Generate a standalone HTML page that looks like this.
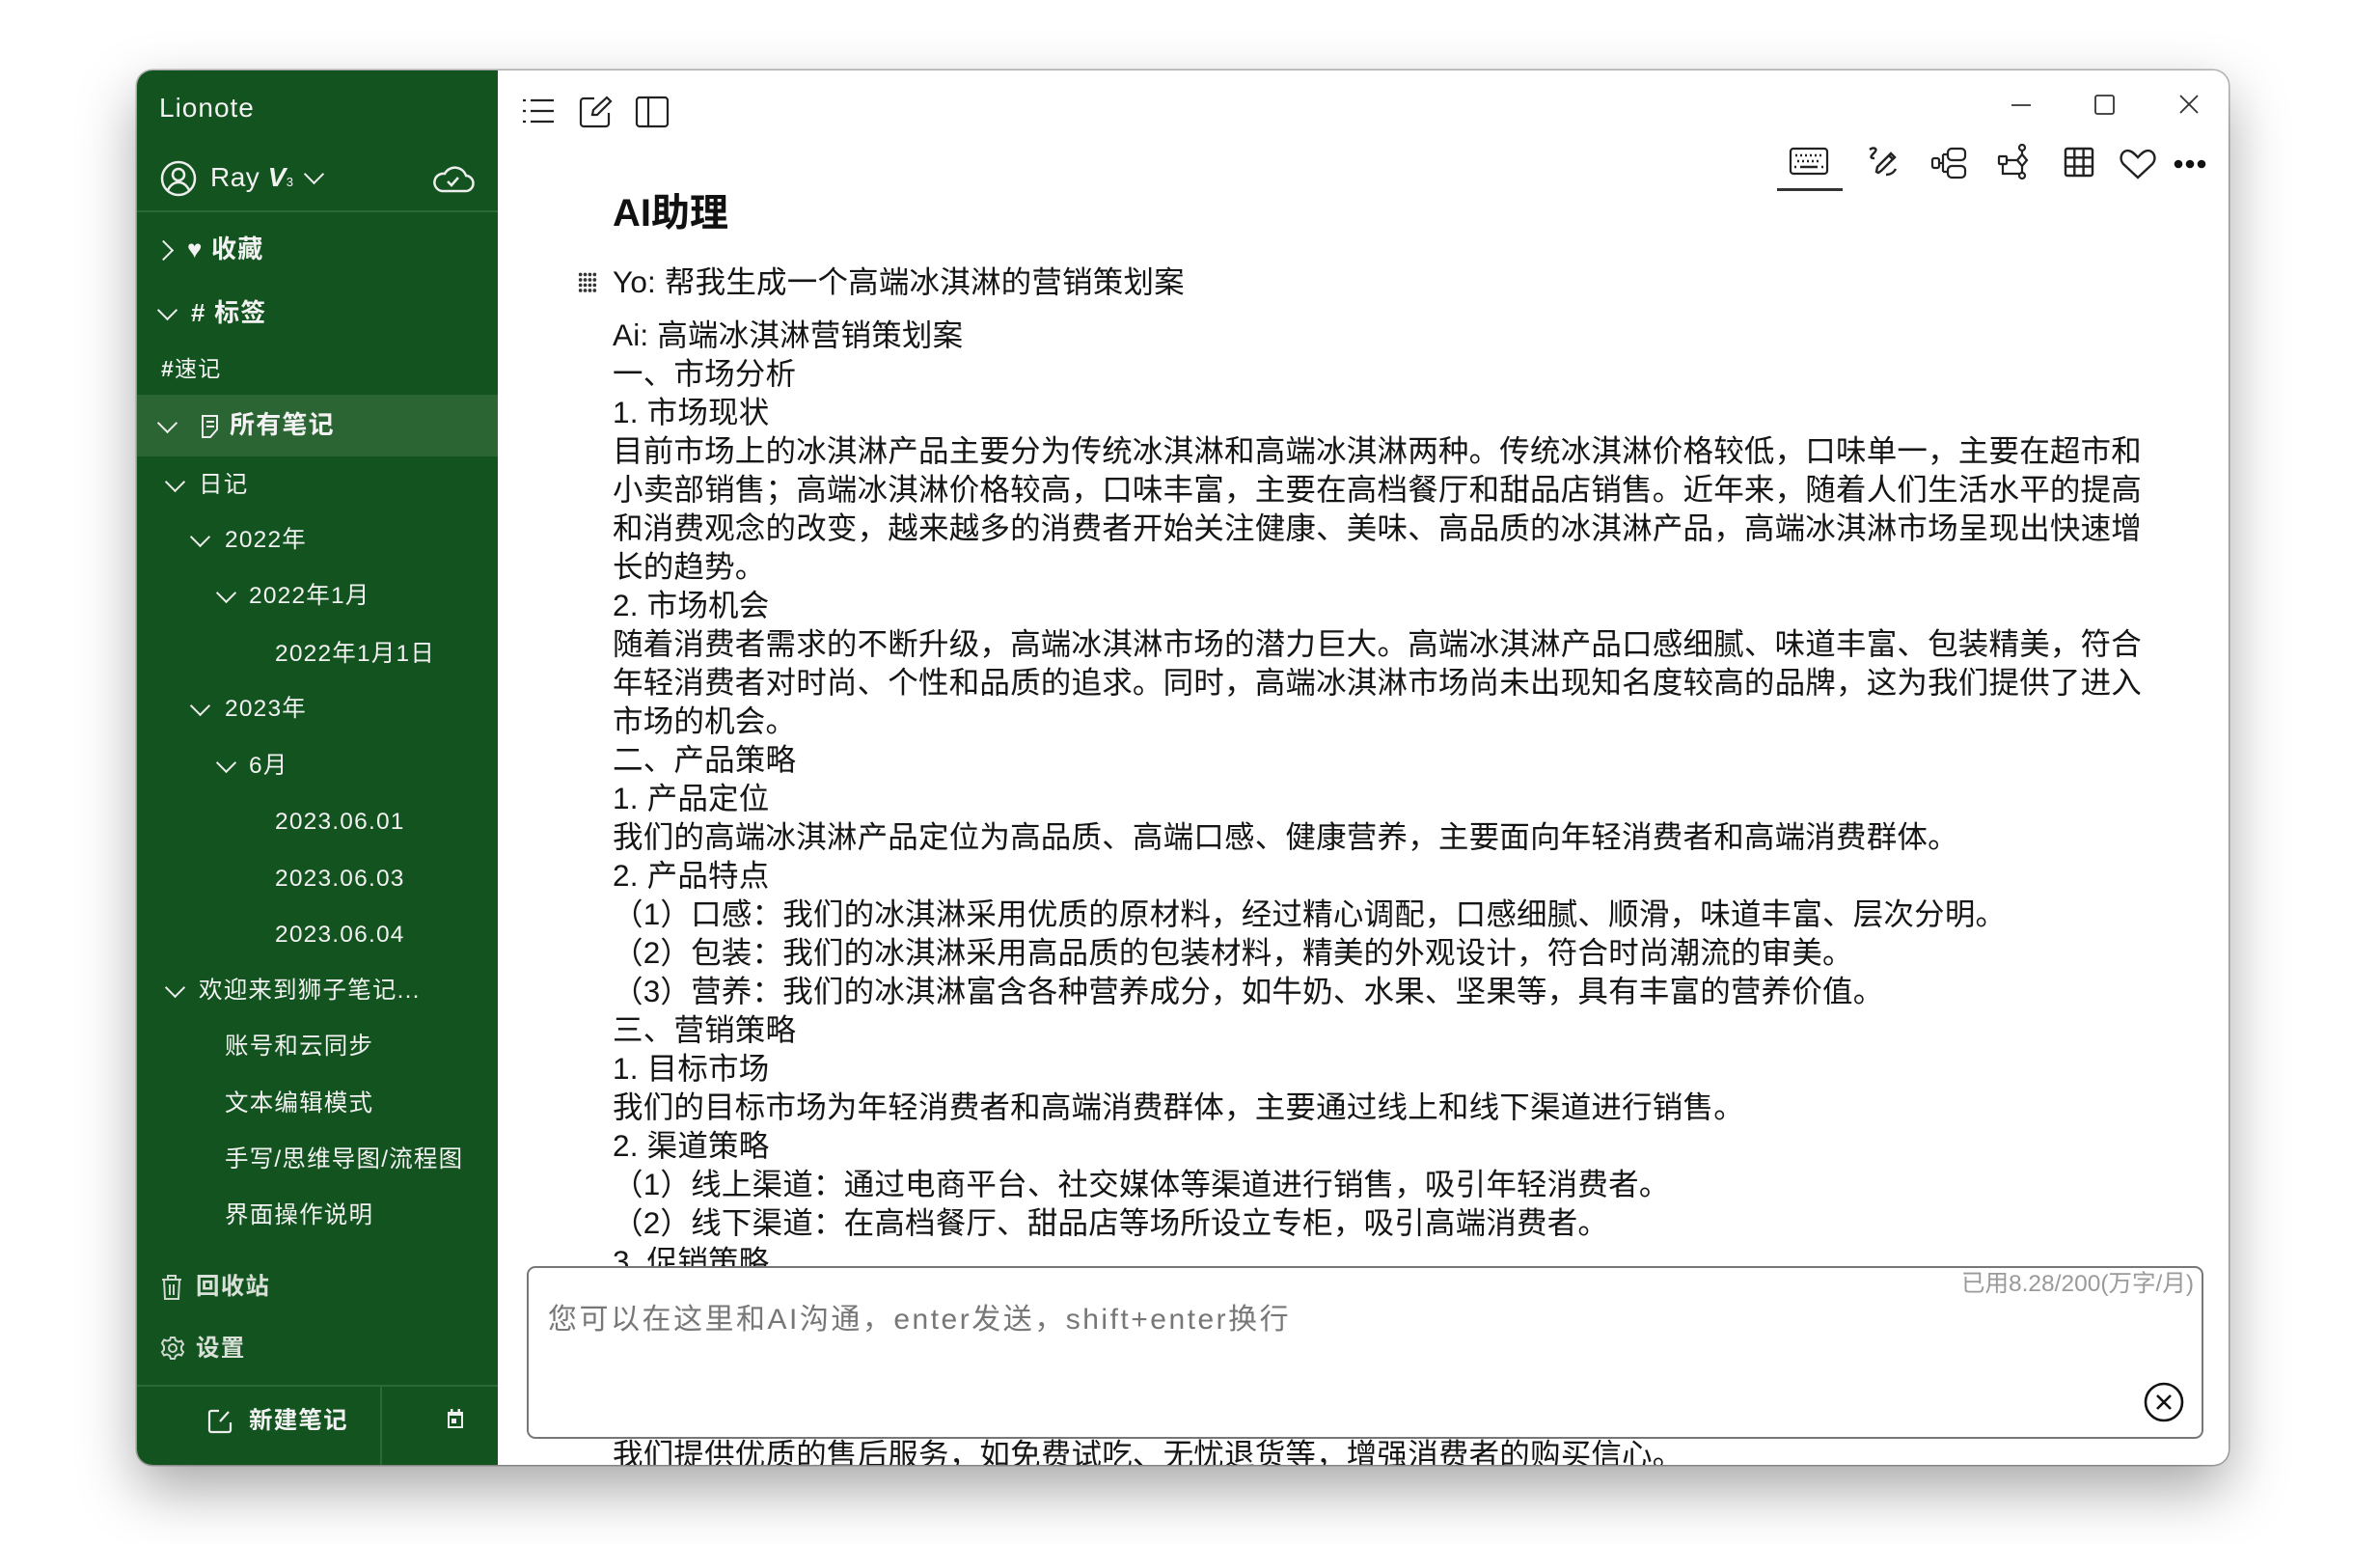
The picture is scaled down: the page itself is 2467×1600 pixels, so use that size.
<!DOCTYPE html>
<html><head><meta charset="utf-8">
<style>
*{margin:0;padding:0;box-sizing:border-box}
body{width:2467px;height:1600px;background:#fff;position:relative;overflow:hidden;font-family:"Liberation Sans","Noto Sans CJK SC",sans-serif}
.win{position:absolute;left:142px;top:73px;width:2168px;height:1445px;border-radius:16px;background:#fff;overflow:hidden;box-shadow:0 25px 60px rgba(0,0,0,.35),0 0 0 1.5px rgba(0,0,0,.28)}
.side{position:absolute;left:0;top:0;width:374px;height:1445px;background:#13531f;color:#f2f2f2}
.s{position:absolute;height:40px;line-height:40px;font-size:24.5px;letter-spacing:1.2px;white-space:nowrap;font-family:"Liberation Sans","Noto Sans CJK SC",sans-serif}
.b{font-weight:bold}
.chev{position:absolute;width:15px;height:15px;border-right:2.2px solid #eee;border-bottom:2.2px solid #eee;transform:rotate(45deg)}
.chr{transform:rotate(-45deg)}
.main{position:absolute;left:374px;top:0;right:0;bottom:0}
.t{position:absolute;left:493px;font-size:31.5px;line-height:40px;height:40px;color:#151515;white-space:nowrap;letter-spacing:0.2px;font-family:"Liberation Sans","Noto Sans CJK SC",sans-serif}
svg{position:absolute;overflow:visible}
</style></head><body>
<div class="win">
<div class="side">
  <div class="s" style="left:23px;top:19px;font-size:28px;letter-spacing:1px">Lionote</div>
  <svg style="left:24px;top:93px" width="38" height="38" viewBox="0 0 38 38" fill="none" stroke="#eee" stroke-width="2.5"><circle cx="19" cy="19" r="17"/><circle cx="19" cy="15" r="6"/><path d="M8 31c3-6 7-8 11-8s8 2 11 8"/></svg>
  <div class="s" style="left:76px;top:91px;font-size:28px;letter-spacing:0.5px">Ray <span style="font-style:italic;font-weight:bold">V</span><span style="font-size:13px">3</span></div>
  <div class="chev" style="left:176px;top:100px"></div>
  <svg style="left:306px;top:98px" width="44" height="30" viewBox="0 0 44 30" fill="none" stroke="#eee" stroke-width="2.5"><path d="M10 27h24a8 8 0 0 0 1-16 12 12 0 0 0-22-2 9 9 0 0 0-3 18z"/><path d="M16 17l4 4 7-8"/></svg>
  <div style="position:absolute;left:0;top:145px;width:374px;height:2px;background:#2a6a35"></div>
  <div class="chev chr" style="left:20px;top:179px"></div>
  <div class="s b" style="left:52px;top:165px;font-size:26px">♥ 收藏</div>
  <div class="chev" style="left:24px;top:241px"></div>
  <div class="s b" style="left:56px;top:231px;font-size:26px"># 标签</div>
  <div class="s" style="left:25px;top:289px;font-size:23px"><b>#</b>速记</div>
  <div style="position:absolute;left:0;top:336px;width:374px;height:64px;background:#2a6533"></div>
  <svg style="left:66px;top:356px" width="20" height="26" viewBox="0 0 20 26" fill="none" stroke="#eee" stroke-width="2"><path d="M2 2h15v14l-7 8H2z"/><path d="M6 8h8M6 13h8"/></svg>
  <div class="chev" style="left:24px;top:358px"></div>
  <div class="s b" style="left:96px;top:347px;font-size:26px">所有笔记</div>
  <div class="chev" style="left:32px;top:419px"></div><div class="s" style="left:64px;top:410px">日记</div>
  <div class="chev" style="left:58px;top:476px"></div><div class="s" style="left:91px;top:467px">2022年</div>
  <div class="chev" style="left:85px;top:534px"></div><div class="s" style="left:116px;top:525px">2022年1月</div>
  <div class="s" style="left:143px;top:585px">2022年1月1日</div>
  <div class="chev" style="left:58px;top:651px"></div><div class="s" style="left:91px;top:642px">2023年</div>
  <div class="chev" style="left:85px;top:710px"></div><div class="s" style="left:116px;top:701px">6月</div>
  <div class="s" style="left:143px;top:759px">2023.06.01</div>
  <div class="s" style="left:143px;top:818px">2023.06.03</div>
  <div class="s" style="left:143px;top:876px">2023.06.04</div>
  <div class="chev" style="left:32px;top:943px"></div><div class="s" style="left:64px;top:934px">欢迎来到狮子笔记...</div>
  <div class="s" style="left:91px;top:992px">账号和云同步</div>
  <div class="s" style="left:91px;top:1051px">文本编辑模式</div>
  <div class="s" style="left:91px;top:1109px">手写/思维导图/流程图</div>
  <div class="s" style="left:91px;top:1167px">界面操作说明</div>
  <svg style="left:25px;top:1247px" width="22" height="28" viewBox="0 0 22 28" fill="none" stroke="#cfd8cf" stroke-width="2"><path d="M1 6h20M7 6V2h8v4M3 6l1 20h14l1-20M9 11v11M13 11v11"/></svg>
  <div class="s b" style="left:61px;top:1241px;color:#d8e0d8">回收站</div>
  <svg style="left:24px;top:1311px" width="26" height="26" viewBox="0 0 26 26" fill="none" stroke="#cfd8cf" stroke-width="2"><circle cx="13" cy="13" r="4"/><path d="M11 2h4l1 3 3 1.5 3-1 2 3.5-2 2.3v3.4l2 2.3-2 3.5-3-1-3 1.5-1 3h-4l-1-3-3-1.5-3 1-2-3.5 2-2.3v-3.4L2 8l2-3.5 3 1L10 5z"/></svg>
  <div class="s b" style="left:61px;top:1305px;color:#d8e0d8">设置</div>
  <div style="position:absolute;left:0;top:1362px;width:374px;height:2px;background:#2a6a35"></div>
  <div style="position:absolute;left:252px;top:1363px;width:2px;height:82px;background:#2a6a35"></div>
  <svg style="left:73px;top:1387px" width="26" height="26" viewBox="0 0 26 26" fill="none" stroke="#eee" stroke-width="2.2"><path d="M12 2H4a2 2 0 0 0-2 2v18a2 2 0 0 0 2 2h18a2 2 0 0 0 2-2v-8"/><path d="M13 13l9-10"/></svg>
  <div class="s b" style="left:116px;top:1380px">新建笔记</div>
  <svg style="left:320px;top:1386px" width="20" height="22" viewBox="0 0 20 22" fill="#eee"><path d="M2 4h16v17H2zM4 8v11h12V8z"/><rect x="5" y="1" width="2.5" height="5"/><rect x="12.5" y="1" width="2.5" height="5"/><rect x="6" y="11" width="5" height="5"/></svg>
</div>
<div class="main">
  <svg style="left:25px;top:29px" width="34" height="26" viewBox="0 0 34 26" fill="none" stroke="#222" stroke-width="2.2"><path d="M9 2h24M9 13h24M9 24h24"/><path d="M1 2h3M1 13h3M1 24h3"/></svg>
  <svg style="left:84px;top:26px" width="34" height="34" viewBox="0 0 34 34" fill="none" stroke="#222" stroke-width="2.2"><path d="M16 3H5a3 3 0 0 0-3 3v23a3 3 0 0 0 3 3h23a3 3 0 0 0 3-3V18"/><path d="M14 20l1-5L29 2l4 4-14 14z"/></svg>
  <svg style="left:143px;top:27px" width="34" height="32" viewBox="0 0 34 32" fill="none" stroke="#222" stroke-width="2.2"><rect x="1" y="1" width="32" height="30" rx="3"/><path d="M13 1v30"/></svg>
  <svg style="left:1569px;top:35px" width="20" height="2" viewBox="0 0 20 2"><path d="M0 1h20" stroke="#333" stroke-width="1.8"/></svg>
  <svg style="left:1655px;top:25px" width="21" height="21" viewBox="0 0 21 21" fill="none" stroke="#333" stroke-width="1.8"><rect x="1" y="1" width="19" height="19" rx="2"/></svg>
  <svg style="left:1743px;top:25px" width="20" height="20" viewBox="0 0 20 20" stroke="#333" stroke-width="1.8"><path d="M1 1l18 18M19 1L1 19"/></svg>
  <svg style="left:1339px;top:80px" width="40" height="28" viewBox="0 0 40 28" fill="none" stroke="#222" stroke-width="2.2"><rect x="1" y="1" width="38" height="26" rx="3"/><path d="M6 8h2M11 8h2M16 8h2M21 8h2M26 8h2M31 8h2M8 14h2M13 14h2M18 14h2M23 14h2M28 14h2M11 20h18M5 20h2M33 20h2" stroke-width="2.5"/></svg>
  <div style="position:absolute;left:1326px;top:122px;width:68px;height:2.5px;background:#333"></div>
  <svg style="left:1419px;top:78px" width="34" height="34" viewBox="0 0 34 34" fill="none" stroke="#222" stroke-width="2.4"><path d="M3 4c4-3 9-1 5 3-3 3-6 6 0 6"/><path d="M12 28l-2-1 1-5L25 8l4 4-14 14zM23 10l4 4"/><path d="M20 30c4 0 8-2 10-6"/></svg>
  <svg style="left:1486px;top:80px" width="36" height="32" viewBox="0 0 36 32" fill="none" stroke="#222" stroke-width="2.2"><rect x="1" y="11" width="7" height="10" rx="2"/><rect x="17" y="1" width="18" height="12" rx="4"/><rect x="17" y="19" width="18" height="12" rx="4"/><path d="M8 16h4M12 7v18M12 7h5M12 25h5"/></svg>
  <svg style="left:1555px;top:76px" width="34" height="38" viewBox="0 0 34 38" fill="none" stroke="#222" stroke-width="2.2"><circle cx="25" cy="4" r="3"/><circle cx="25" cy="33" r="3"/><rect x="1" y="13" width="8" height="8" rx="1"/><path d="M25 11l5 6-5 6-5-6z"/><path d="M9 17h11M25 7v4M25 23v7M5 21v10h17"/></svg>
  <svg style="left:1624px;top:80px" width="30" height="30" viewBox="0 0 30 30" fill="none" stroke="#222" stroke-width="2.4"><rect x="1" y="1" width="28" height="28" rx="2"/><path d="M10.3 1v28M19.6 1v28M1 10.3h28M1 19.6h28"/></svg>
  <svg style="left:1681px;top:81px" width="38" height="32" viewBox="0 0 38 32" fill="none" stroke="#222" stroke-width="2.4"><path d="M19 30L4 16C-2 9 4-1 12 3c3 1.5 5 4 7 6 2-2 4-4.5 7-6 8-4 14 6 8 13z"/></svg>
  <svg style="left:1737px;top:92px" width="34" height="10" viewBox="0 0 34 10" fill="#111"><circle cx="5" cy="5" r="4.3"/><circle cx="17" cy="5" r="4.3"/><circle cx="29" cy="5" r="4.3"/></svg>
  <div style="position:absolute;left:119px;top:123px;font-size:40px;font-weight:bold;color:#111;line-height:50px;font-family:'Liberation Sans','Noto Sans CJK SC',sans-serif">AI助理</div>
  <svg style="left:83px;top:209px" width="20" height="22" viewBox="0 0 16 18" fill="#333"><g id="d"><circle cx="2" cy="2" r="1.5"/><circle cx="6" cy="2" r="1.5"/><circle cx="10" cy="2" r="1.5"/><circle cx="14" cy="2" r="1.5"/></g><use href="#d" y="4.5"/><use href="#d" y="9"/><use href="#d" y="13.5"/></svg>
</div>
<div style="position:absolute;left:0;top:0;width:2168px;height:1445px">
<div class="t" style="top:199px">Yo: 帮我生成一个高端冰淇淋的营销策划案</div>
<div class="t" style="top:254px">Ai: 高端冰淇淋营销策划案</div>
<div class="t" style="top:294px">一、市场分析</div>
<div class="t" style="top:334px">1. 市场现状</div>
<div class="t" style="top:374px">目前市场上的冰淇淋产品主要分为传统冰淇淋和高端冰淇淋两种。传统冰淇淋价格较低，口味单一，主要在超市和</div>
<div class="t" style="top:414px">小卖部销售；高端冰淇淋价格较高，口味丰富，主要在高档餐厅和甜品店销售。近年来，随着人们生活水平的提高</div>
<div class="t" style="top:454px">和消费观念的改变，越来越多的消费者开始关注健康、美味、高品质的冰淇淋产品，高端冰淇淋市场呈现出快速增</div>
<div class="t" style="top:494px">长的趋势。</div>
<div class="t" style="top:534px">2. 市场机会</div>
<div class="t" style="top:574px">随着消费者需求的不断升级，高端冰淇淋市场的潜力巨大。高端冰淇淋产品口感细腻、味道丰富、包装精美，符合</div>
<div class="t" style="top:614px">年轻消费者对时尚、个性和品质的追求。同时，高端冰淇淋市场尚未出现知名度较高的品牌，这为我们提供了进入</div>
<div class="t" style="top:654px">市场的机会。</div>
<div class="t" style="top:694px">二、产品策略</div>
<div class="t" style="top:734px">1. 产品定位</div>
<div class="t" style="top:774px">我们的高端冰淇淋产品定位为高品质、高端口感、健康营养，主要面向年轻消费者和高端消费群体。</div>
<div class="t" style="top:814px">2. 产品特点</div>
<div class="t" style="top:854px">（1）口感：我们的冰淇淋采用优质的原材料，经过精心调配，口感细腻、顺滑，味道丰富、层次分明。</div>
<div class="t" style="top:894px">（2）包装：我们的冰淇淋采用高品质的包装材料，精美的外观设计，符合时尚潮流的审美。</div>
<div class="t" style="top:934px">（3）营养：我们的冰淇淋富含各种营养成分，如牛奶、水果、坚果等，具有丰富的营养价值。</div>
<div class="t" style="top:974px">三、营销策略</div>
<div class="t" style="top:1014px">1. 目标市场</div>
<div class="t" style="top:1054px">我们的目标市场为年轻消费者和高端消费群体，主要通过线上和线下渠道进行销售。</div>
<div class="t" style="top:1094px">2. 渠道策略</div>
<div class="t" style="top:1134px">（1）线上渠道：通过电商平台、社交媒体等渠道进行销售，吸引年轻消费者。</div>
<div class="t" style="top:1174px">（2）线下渠道：在高档餐厅、甜品店等场所设立专柜，吸引高端消费者。</div>
<div class="t" style="top:1214px">3. 促销策略</div>
<div class="t" style="top:1414px">我们提供优质的售后服务，如免费试吃、无忧退货等，增强消费者的购买信心。</div>
<div style="position:absolute;left:404px;top:1239px;width:1738px;height:179px;background:#fff;border:2px solid #777;border-radius:9px">
  <div style="position:absolute;right:8px;top:2px;font-size:24.5px;color:#9a9a9a;line-height:30px;font-family:'Liberation Sans','Noto Sans CJK SC',sans-serif">已用8.28/200(万字/月)</div>
  <div style="position:absolute;left:20px;top:34px;font-size:30px;color:#777;line-height:40px;letter-spacing:2.5px;white-space:nowrap;font-family:'Liberation Sans','Noto Sans CJK SC',sans-serif">您可以在这里和AI沟通，enter发送，shift+enter换行</div>
  <svg style="left:1674px;top:118px" width="42" height="42" viewBox="0 0 42 42" fill="none" stroke="#111" stroke-width="2.6"><circle cx="21" cy="21" r="19"/><path d="M14 14l14 14M28 14L14 28"/></svg>
</div>
</div>
</div>
</body></html>
